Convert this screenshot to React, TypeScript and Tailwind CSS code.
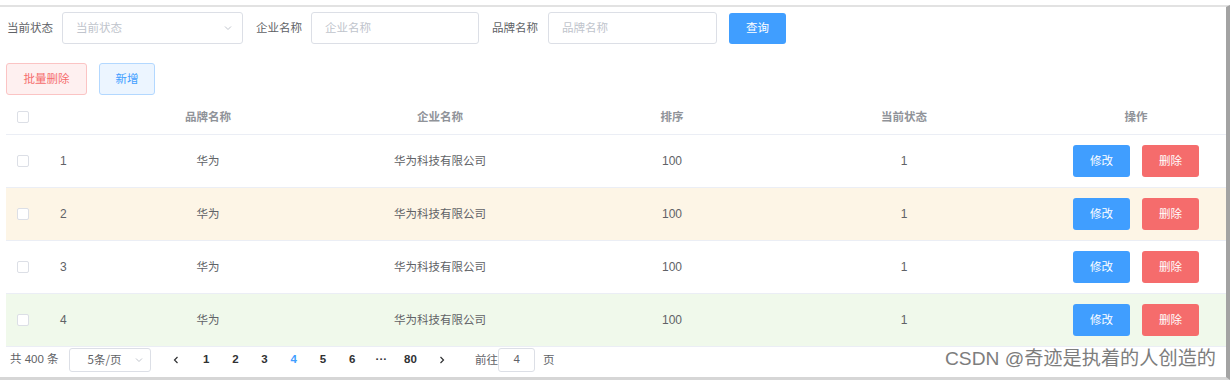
import React from "react";

const FONT = { fontFamily: '"Noto Sans CJK SC", "Liberation Sans", sans-serif' };
const NUM = { fontFamily: '"Liberation Sans", "Noto Sans CJK SC", sans-serif' };

function Chevron({ className = "" }: { className?: string }) {
  return (
    <svg className={className} width="10" height="10" viewBox="0 0 10 10" fill="none">
      <path d="M2 3.5 L5 6.5 L8 3.5" stroke="#c0c4cc" strokeWidth="1" />
    </svg>
  );
}

function Checkbox() {
  return <div className="w-[12px] h-[12px] border border-[#dcdfe6] rounded-[2px] bg-white" />;
}

const rows = [
  { id: 1, bg: "bg-white" },
  { id: 2, bg: "bg-[#fdf5e6]" },
  { id: 3, bg: "bg-white" },
  { id: 4, bg: "bg-[#f0f9eb]" },
];

export default function App() {
  return (
    <div className="w-[1231px] h-[382px] bg-white pt-[5px] relative overflow-hidden" style={FONT}>
      <div className="w-[1230px] h-[375px] border-t-[2px] border-t-[#e2e2e2] border-r-[4px] border-r-[#a3a3a3] border-b-[3px] border-b-[#d6d6d6] overflow-hidden text-[11.5px] text-[#606266]">
        {/* form row */}
        <div className="flex items-center h-[32px] mt-[5px] pl-[7px]">
          <span className="w-[46px]">当前状态</span>
          <div className="ml-[9px] w-[181px] h-[32px] border border-[#dcdfe6] rounded-[3px] flex items-center justify-between pl-[13px] pr-[9px]">
            <span className="text-[#c0c4cc]">当前状态</span>
            <Chevron />
          </div>
          <span className="ml-[13px] w-[46px]">企业名称</span>
          <div className="ml-[9px] w-[168px] h-[32px] border border-[#dcdfe6] rounded-[3px] flex items-center pl-[13px]">
            <span className="text-[#c0c4cc]">企业名称</span>
          </div>
          <span className="ml-[13px] w-[46px]">品牌名称</span>
          <div className="ml-[10px] w-[169px] h-[32px] border border-[#dcdfe6] rounded-[3px] flex items-center pl-[13px]">
            <span className="text-[#c0c4cc]">品牌名称</span>
          </div>
          <div className="ml-[12px] w-[57px] h-[31px] bg-[#409eff] rounded-[3px] text-white flex items-center justify-center">
            查询
          </div>
        </div>

        {/* action buttons */}
        <div className="flex mt-[19px] pl-[6px] h-[32px]">
          <div className="w-[81px] h-[32px] bg-[#fef0f0] border border-[#fbc4c4] rounded-[3px] text-[#f56c6c] flex items-center justify-center">
            批量删除
          </div>
          <div className="ml-[12px] w-[56px] h-[32px] bg-[#ecf5ff] border border-[#b3d8ff] rounded-[3px] text-[#409eff] flex items-center justify-center">
            新增
          </div>
        </div>

        {/* table */}
        <div className="mt-[5px] ml-[6px] w-[1220px] overflow-hidden">
          <div className="flex items-center h-[35px] border-b border-[#ebeef5] text-[#909399] font-bold w-[1246px]">
            <div className="w-[34px] flex justify-center"><Checkbox /></div>
            <div className="w-[52px]" />
            {["品牌名称", "企业名称", "排序", "当前状态", "操作"].map((h) => (
              <div key={h} className="w-[232px] text-center">{h}</div>
            ))}
          </div>
          {rows.map((r) => (
            <div key={r.id} className={`flex items-center h-[53px] border-b border-[#ebeef5] w-[1246px] ${r.bg}`}>
              <div className="w-[34px] flex justify-center"><Checkbox /></div>
              <div className="w-[52px] pl-[20px] text-[12px]" style={NUM}>{r.id}</div>
              <div className="w-[232px] text-center">华为</div>
              <div className="w-[232px] text-center">华为科技有限公司</div>
              <div className="w-[232px] text-center text-[12px]" style={NUM}>100</div>
              <div className="w-[232px] text-center text-[12px]" style={NUM}>1</div>
              <div className="w-[232px] flex justify-center gap-[12px]">
                <div className="w-[57px] h-[32px] bg-[#409eff] rounded-[3px] text-white flex items-center justify-center">修改</div>
                <div className="w-[57px] h-[32px] bg-[#f56c6c] rounded-[3px] text-white flex items-center justify-center">删除</div>
              </div>
            </div>
          ))}
        </div>

        {/* pagination */}
        <div className="flex items-center h-[26px] pl-[10px]">
          <span style={NUM}>共 400 条</span>
          <div className="ml-[10px] w-[82px] h-[24px] border border-[#dcdfe6] rounded-[3px] flex items-center justify-between pl-[18px] pr-[6px]">
            <span>5条/页</span>
            <Chevron />
          </div>
          <div className="ml-[9px] flex items-center font-bold text-[#303133] text-[11.5px]" style={NUM}>
            <div className="w-[32px] flex justify-center">
              <svg width="10" height="10" viewBox="0 0 10 10" fill="none"><path d="M6.5 2 L3.5 5 L6.5 8" stroke="#303133" strokeWidth="1.2" /></svg>
            </div>
            {["1", "2", "3", "4", "5", "6", "···", "80"].map((p) => (
              <div key={p} className={`w-[29.2px] text-center ${p === "4" ? "text-[#409eff]" : ""}`}>{p}</div>
            ))}
            <div className="w-[33px] flex justify-center">
              <svg width="10" height="10" viewBox="0 0 10 10" fill="none"><path d="M3.5 2 L6.5 5 L3.5 8" stroke="#303133" strokeWidth="1.2" /></svg>
            </div>
          </div>
          <span className="ml-[17px]">前往</span>
          <div className="ml-[0px] w-[37px] h-[24px] border border-[#dcdfe6] rounded-[3px] flex items-center justify-center" style={NUM}>4</div>
          <span className="ml-[8px]">页</span>
        </div>
      </div>

      <div className="absolute left-[945px] top-[346px] text-[19.2px] text-[#7d7d7d] leading-[26px]" style={NUM}>
        CSDN @奇迹是执着的人创造的
      </div>
    </div>
  );
}
